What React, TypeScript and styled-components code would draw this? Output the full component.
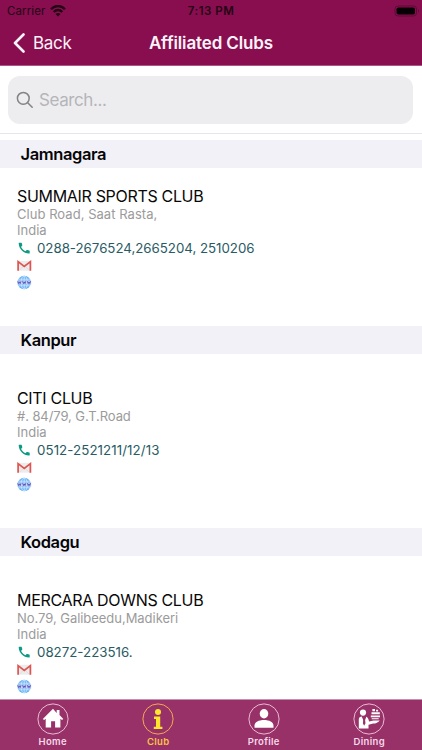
import React from "react";
import styled, { createGlobalStyle } from "styled-components";

const GlobalStyle = createGlobalStyle`
  * { box-sizing: border-box; }
  body { margin: 0; background: #fff; font-family: Inter, "Liberation Sans", sans-serif; }
`;

const Screen = styled.div`
  display: flex;
  flex-direction: column;
  width: 422px;
  height: 750px;
  overflow: hidden;
  background: #fff;
`;

const Header = styled.header`
  flex: none;
  height: 66px;
  background: #880e4f;
  border-bottom: 1px solid #aa5586;
`;

const StatusBar = styled.div`
  display: grid;
  grid-template-columns: 1fr auto 1fr;
  align-items: center;
  height: 22px;
  padding: 0 7px;
  color: #240615;
  font-size: 11.5px;
`;

const Carrier = styled.div`
  display: flex;
  align-items: center;
  gap: 5px;
  letter-spacing: 0.1px;
`;

const Clock = styled.div`
  font-weight: 600;
  letter-spacing: 0.5px;
`;

const BatterySlot = styled.div`
  display: flex;
  justify-content: flex-end;
  margin-right: -5px;
`;

const NavBar = styled.div`
  display: grid;
  grid-template-columns: 1fr auto 1fr;
  align-items: center;
  height: 42px;
  padding: 0 13px;
  color: #fff3fa;
  font-size: 17px;
`;

const BackButton = styled.div`
  display: flex;
  align-items: center;
  gap: 8px;
  letter-spacing: -0.3px;
`;

const Title = styled.div`
  font-size: 17px;
  font-weight: 600;
  letter-spacing: -0.13px;
`;

const SearchArea = styled.div`
  flex: none;
  height: 68px;
  padding: 10px 9px 0 8px;
  border-bottom: 1px solid #e6e6ea;
`;

const SearchBox = styled.div`
  display: flex;
  align-items: center;
  gap: 5px;
  height: 48px;
  padding-left: 8px;
  border-radius: 12px;
  background: #ededef;
  color: #b5b5b9;
  font-size: 17px;
  letter-spacing: -0.4px;
`;

const List = styled.main`
  flex: 1;
  min-height: 0;
  padding-top: 6px;
  overflow: hidden;
`;

const SectionHeader = styled.h2`
  height: 28px;
  margin: 0;
  padding-left: 20.5px;
  background: #f2f1f8;
  color: #050505;
  font-size: 16.5px;
  font-weight: 600;
  line-height: 28px;
  letter-spacing: -0.4px;
`;

const ClubCard = styled.section<{ $top: number; $height: number }>`
  height: ${(p) => p.$height}px;
  padding: ${(p) => p.$top}px 0 0 17px;
`;

const ClubName = styled.div`
  color: #080808;
  font-size: 16px;
  line-height: 20px;
  letter-spacing: -0.32px;
  white-space: nowrap;
`;

const AddressLine = styled.div<{ $tracking: number }>`
  color: #9b9b9b;
  font-size: 13px;
  line-height: 16px;
  letter-spacing: ${(p) => p.$tracking}px;
`;

const PhoneRow = styled.div<{ $tracking: number }>`
  display: flex;
  align-items: center;
  gap: 6px;
  height: 19px;
  color: #285b65;
  font-size: 13.3px;
  letter-spacing: ${(p) => p.$tracking}px;
`;

const LinkRow = styled.div`
  display: flex;
  align-items: center;
  height: 17px;
`;

const TabBar = styled.nav`
  flex: none;
  display: grid;
  grid-template-columns: repeat(4, 1fr);
  height: 51px;
  padding-top: 3px;
  border-top: 1px solid #c88fae;
  background: #983168;
`;

const Tab = styled.div<{ $active?: boolean }>`
  display: flex;
  flex-direction: column;
  align-items: center;
  color: ${(p) => (p.$active ? "#fbc246" : "#f8d9eb")};
  font-size: 9.5px;
  font-weight: 600;
  line-height: 12px;
  letter-spacing: 0.32px;
`;

const TabIcon = styled.svg`
  display: block;
  width: 32px;
  height: 32px;
  margin-bottom: 1px;
`;

const WifiIcon = () => (
  <svg width="16" height="12" viewBox="0 0 16 12" fill="none" stroke="currentColor" strokeWidth="2.400">
    <path d="M1 4.200C5-.1 11-.1 15 4.200M3.700 7c2.500-2.600 6.100-2.600 8.600 0" />
    <path d="M8 11.500 5.500 9c1.400-1.300 3.600-1.300 5 0Z" fill="currentColor" stroke="none" />
  </svg>
);

const BatteryIcon = () => (
  <svg width="26" height="12" viewBox="0 0 26 12">
    <rect x="1" y="1" width="21.500" height="10" rx="3" fill="none" stroke="#5b0b36" />
    <rect x="2.500" y="2.400" width="18.500" height="7.200" rx="1.800" fill="#060004" />
    <path d="M24 4.500c1.200.4 1.200 2.600 0 3Z" fill="#5b0b36" />
  </svg>
);

const BackIcon = () => (
  <svg width="12" height="20" viewBox="0 0 12 20" fill="none" stroke="currentColor" strokeWidth="2.600" strokeLinecap="round" strokeLinejoin="round">
    <path d="M10.500 1.500 2 10l8.500 8.500" />
  </svg>
);

const SearchIcon = () => (
  <svg width="18" height="18" viewBox="0 0 18 18" fill="none" stroke="#828287" strokeWidth="1.500" strokeLinecap="round">
    <circle cx="7.300" cy="7.300" r="5.900" />
    <path d="m11.700 11.700 4.500 4.600" />
  </svg>
);

const PhoneIcon = () => (
  <svg width="14" height="14" viewBox="0 0 14 14">
    <path
      d="M4.100 1.700H2.300c-.4 0-.7.300-.6.700C2.100 8 6.400 12.200 12 12.500c.4 0 .7-.2.700-.6V10c0-.3-.2-.6-.5-.6l-1.800-.5c-.3 0-.5 0-.7.200L8.500 10.300C6.600 9.400 5 7.800 4.100 5.900l1.100-1.300c.2-.2.2-.4.100-.7l-.6-1.800c-.1-.2-.3-.4-.6-.4Z"
      fill="#0b9a82"
    />
  </svg>
);

const MailIcon = () => (
  <svg width="15" height="12" viewBox="0 0 15 12">
    <path d="M1 .8h12.500v9.900H1Z" fill="#ececec" />
    <path d="m2.500 10.200 4.800-5 4.700 5" fill="none" stroke="#d8d8d8" strokeWidth=".7" />
    <path d="M1.100 10.700V1.700l6.150 4.800 6.150-4.800v9" fill="none" stroke="#df5450" strokeWidth="1.700" />
  </svg>
);

const WebIcon = () => (
  <svg width="15" height="15" viewBox="0 0 15 15">
    <circle cx="7.200" cy="7.500" r="6.700" fill="#62b0f5" />
    <g fill="none" stroke="#d3eaff" strokeWidth=".8">
      <ellipse cx="7.200" cy="7.500" rx="3.200" ry="6.500" />
      <path d="M7.200 1v13M1.500 4.200h11.400M1.500 10.800h11.400" />
    </g>
    <path d="M.2 5.500h14v4H.2Z" fill="#c9d6f5" />
    <path
      d="m.8 6.200.8 2.400.8-1.800.8 1.800.8-2.400m1.600 0 .8 2.400.8-1.800.8 1.800.8-2.400m1.600 0 .8 2.400.8-1.800.8 1.800.8-2.400"
      fill="none"
      stroke="#4a4abb"
      strokeWidth=".85"
    />
  </svg>
);

const Ring = ({ color = "#e9bad3" }: { color?: string }) => (
  <circle cx="16" cy="16" r="15.100" fill="none" stroke={color} strokeWidth="1" />
);

const HomeIcon = () => (
  <TabIcon viewBox="0 0 32 32">
    <Ring />
    <path d="M16 5.800 5.800 15.900l1.300 1.200 1.600-1.400v8.900h5.400v-6.400h4v6.400h5.300v-8.900l1.600 1.400 1.300-1.200-3.800-3.800V7h-2.800v3.100Z" fill="#fff" />
  </TabIcon>
);

const InfoIcon = () => (
  <TabIcon viewBox="0 0 32 32">
    <Ring color="#f4a850" />
    <circle cx="16" cy="9" r="3" fill="#ffe62e" />
    <path d="M12 13.500h6.200v10.200h2.200V26h-8.600v-2.300H14v-7.800h-2Z" fill="#ffe62e" />
  </TabIcon>
);

const ProfileIcon = () => (
  <TabIcon viewBox="0 0 32 32">
    <Ring />
    <ellipse cx="16" cy="10.800" rx="4.300" ry="4.700" fill="#fff" />
    <path d="M6.500 24.800v-2.100c0-3.600 4.300-5.700 9.500-5.700s9.500 2.100 9.500 5.700v2.100Z" fill="#fff" />
  </TabIcon>
);

const DiningIcon = () => (
  <TabIcon viewBox="0 0 32 32">
    <Ring />
    <g fill="#fff">
      <circle cx="10" cy="9.600" r="3.100" />
      <path d="M5.800 25.500v-9c0-2 1.300-2.900 3-2.900l2.400 5.800 2-5.600c1.400.5 2.200 1.700 2.900 4.600l4.500-1h6.200c-1.500 2.100-4 3-6.600 3.200l-4.700 1.100v3.800H5.800Z" />
      <path d="M18.500 9.300h8.300v2h-8.300Zm-.7 3.100H27v1.900h-9.200Zm.9 2.900h7v1h-7ZM19.400 6.100H22v2.200h-2.600Zm3.700.7h2v1.700h-2Z" />
    </g>
    <path d="m9.300 13.800 1.700 1 1.700-1-.7 2.500.5 4-1.400 2.400-1.200-2.500.5-4Z" fill="#983168" />
  </TabIcon>
);

interface Club {
  city: string;
  name: string;
  street: string;
  phone: string;
  top: number;
  height: number;
  streetTracking: number;
  phoneTracking: number;
}

const clubs: Club[] = [
  { city: "Jamnagara", name: "SUMMAIR SPORTS CLUB", street: "Club Road, Saat Rasta,", phone: "0288-2676524,2665204, 2510206", top: 18, height: 158, streetTracking: 0.04, phoneTracking: -0.02 },
  { city: "Kanpur", name: "CITI CLUB", street: "#. 84/79, G.T.Road", phone: "0512-2521211/12/13", top: 34, height: 174, streetTracking: -0.08, phoneTracking: 0.08 },
  { city: "Kodagu", name: "MERCARA DOWNS CLUB", street: "No.79, Galibeedu,Madikeri", phone: "08272-223516.", top: 34, height: 174, streetTracking: -0.04, phoneTracking: 0 },
];

const tabs = [
  { label: "Home", Icon: HomeIcon },
  { label: "Club", Icon: InfoIcon, active: true },
  { label: "Profile", Icon: ProfileIcon },
  { label: "Dining", Icon: DiningIcon },
];

export default function App() {
  return (
    <Screen>
      <GlobalStyle />
      <Header>
        <StatusBar>
          <Carrier>Carrier <WifiIcon /></Carrier>
          <Clock>7:13 PM</Clock>
          <BatterySlot><BatteryIcon /></BatterySlot>
        </StatusBar>
        <NavBar>
          <BackButton><BackIcon />Back</BackButton>
          <Title>Affiliated Clubs</Title>
        </NavBar>
      </Header>
      <SearchArea>
        <SearchBox><SearchIcon />Search...</SearchBox>
      </SearchArea>
      <List>
        {clubs.map((club) => (
          <React.Fragment key={club.city}>
            <SectionHeader>{club.city}</SectionHeader>
            <ClubCard $top={club.top} $height={club.height}>
              <ClubName>{club.name}</ClubName>
              <AddressLine $tracking={club.streetTracking}>{club.street}</AddressLine>
              <AddressLine $tracking={0}>India</AddressLine>
              <PhoneRow $tracking={club.phoneTracking}><PhoneIcon />{club.phone}</PhoneRow>
              <LinkRow><MailIcon /></LinkRow>
              <LinkRow><WebIcon /></LinkRow>
            </ClubCard>
          </React.Fragment>
        ))}
      </List>
      <TabBar>
        {tabs.map(({ label, Icon, active }) => (
          <Tab key={label} $active={active}><Icon />{label}</Tab>
        ))}
      </TabBar>
    </Screen>
  );
}
